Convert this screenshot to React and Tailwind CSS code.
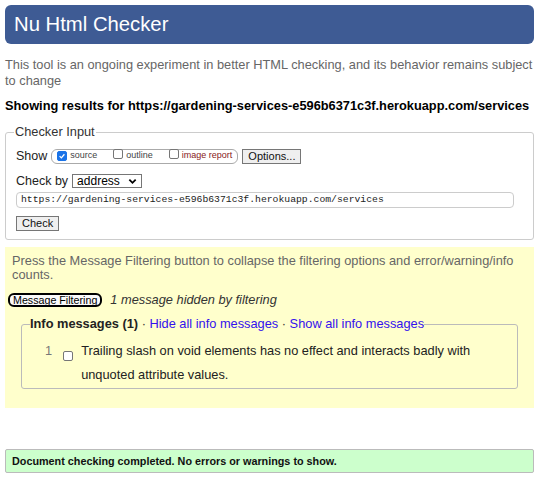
import React from 'react';

const Box = ({ checked }) => (
  <span
    className={`inline-flex h-[10px] w-[10px] items-center justify-center rounded-[2px] border ${
      checked ? 'border-[#1a73e8] bg-[#1a73e8]' : 'border-[#767676] bg-white'
    }`}
  >
    {checked && (
      <svg viewBox="0 0 10 10" className="h-[8px] w-[8px]">
        <path d="M2 5.2 L4.2 7.3 L8 2.8" fill="none" stroke="white" strokeWidth="1.6" />
      </svg>
    )}
  </span>
);

const App = () => {
  const url = 'https://gardening-services-e596b6371c3f.herokuapp.com/services';
  return (
    <div className="min-h-[481px] bg-white px-[5px] pt-[5px] font-['Liberation_Sans',Arial,sans-serif] text-[12.8px] text-black">
      <h1 className="flex h-[39px] items-center rounded-[6px] bg-[#3e5b94] pl-[9px] text-[20.3px] text-white">
        Nu Html Checker
      </h1>

      <p className="mt-[13px] text-[12.8px] leading-[16px] text-[#666]">
        This tool is an ongoing experiment in better HTML checking, and its behavior remains subject to change
      </p>
      <p className="mt-[9px] text-[12.8px] font-bold leading-[16px]">
        Showing results for {url}
      </p>

      <fieldset className="mt-[10px] h-[116px] rounded-[3px] border border-[#ccc] px-[10px]">
        <legend className="ml-[-2px] px-[1px] text-[12.8px] leading-[16px] text-[#333]">Checker Input</legend>
        <div className="mt-[8px] flex items-center">
          <span className="text-[12.5px] leading-[16px] text-[#222]">Show</span>
          <span className="ml-[4px] flex h-[15px] items-center rounded-[6px] border border-[#aaa] pl-[5px] pr-[5px] text-[9px] text-[#444]">
            <Box checked />
            <span className="ml-[3px]">source</span>
            <span className="ml-[16px]"><Box /></span>
            <span className="ml-[3px]">outline</span>
            <span className="ml-[16px]"><Box /></span>
            <span className="ml-[3px] text-[#822]">image report</span>
          </span>
          <span className="ml-[4px] flex h-[15px] items-center border border-[#767676] bg-[#efefef] px-[5px] text-[11px] text-[#111]">
            Options...
          </span>
        </div>
        <div className="mt-[9px] flex items-center">
          <span className="text-[12.5px] leading-[16px] text-[#222]">Check by</span>
          <span className="ml-[4px] flex h-[14px] w-[70px] items-center justify-between border border-[#767676] bg-white px-[4px] text-[12px]">
            address
            <svg viewBox="0 0 10 10" className="h-[9px] w-[9px]">
              <path d="M1.5 3 L5 6.5 L8.5 3" fill="none" stroke="black" strokeWidth="2" />
            </svg>
          </span>
        </div>
        <div className="mt-[3px] flex h-[16px] w-[498px] items-center rounded-[4px] border border-[#ccc] px-[4px] font-['Liberation_Mono',monospace] text-[9.75px] text-[#222]">
          {url}
        </div>
        <span className="mt-[8px] inline-flex h-[15px] items-center border border-[#767676] bg-[#efefef] px-[5px] text-[11px] text-[#111]">
          Check
        </span>
      </fieldset>

      <div className="mt-[7px] h-[161px] bg-[#ffffcc] px-[7px] pt-[7px]">
        <p className="text-[12.8px] leading-[14px] text-[#666]">
          Press the Message Filtering button to collapse the filtering options and error/warning/info counts.
        </p>
        <div className="mt-[8px] flex items-center">
          <span className="ml-[-4px] flex h-[14px] items-center rounded-[6px] border-2 border-black bg-[#fafafa] px-[3px] text-[10.7px]">
            Message Filtering
          </span>
          <span className="ml-[8px] text-[12.8px] italic text-[#333]">1 message hidden by filtering</span>
        </div>
        <fieldset className="mx-[9px] mt-[7px] h-[73px] rounded-[3px] border border-[#bbb] pl-[23px]">
          <legend className="ml-[-15px] text-[12.8px] leading-[16px]">
            <b className="text-[#222]">Info messages (1)</b>
            <span className="text-[#333]"> · </span>
            <span className="text-[#3311ee]">Hide all info messages</span>
            <span className="text-[#333]"> · </span>
            <span className="text-[#3311ee]">Show all info messages</span>
          </legend>
          <div className="mt-[7px] flex text-[12.8px] leading-[24px] text-[#222]">
            <span className="text-[#777]">1</span>
            <span className="ml-[11px] mt-[6px]"><Box /></span>
            <span className="ml-[8px] w-[400px]">
              Trailing slash on void elements has no effect and interacts badly with unquoted attribute values.
            </span>
          </div>
        </fieldset>
      </div>

      <div className="mt-[41px] flex h-[24px] items-center rounded-[2px] border border-[#bbb] bg-[#ccffcc] pl-[6px] text-[10.8px] font-bold text-[#111]">
        Document checking completed. No errors or warnings to show.
      </div>
    </div>
  );
};

export default App;
